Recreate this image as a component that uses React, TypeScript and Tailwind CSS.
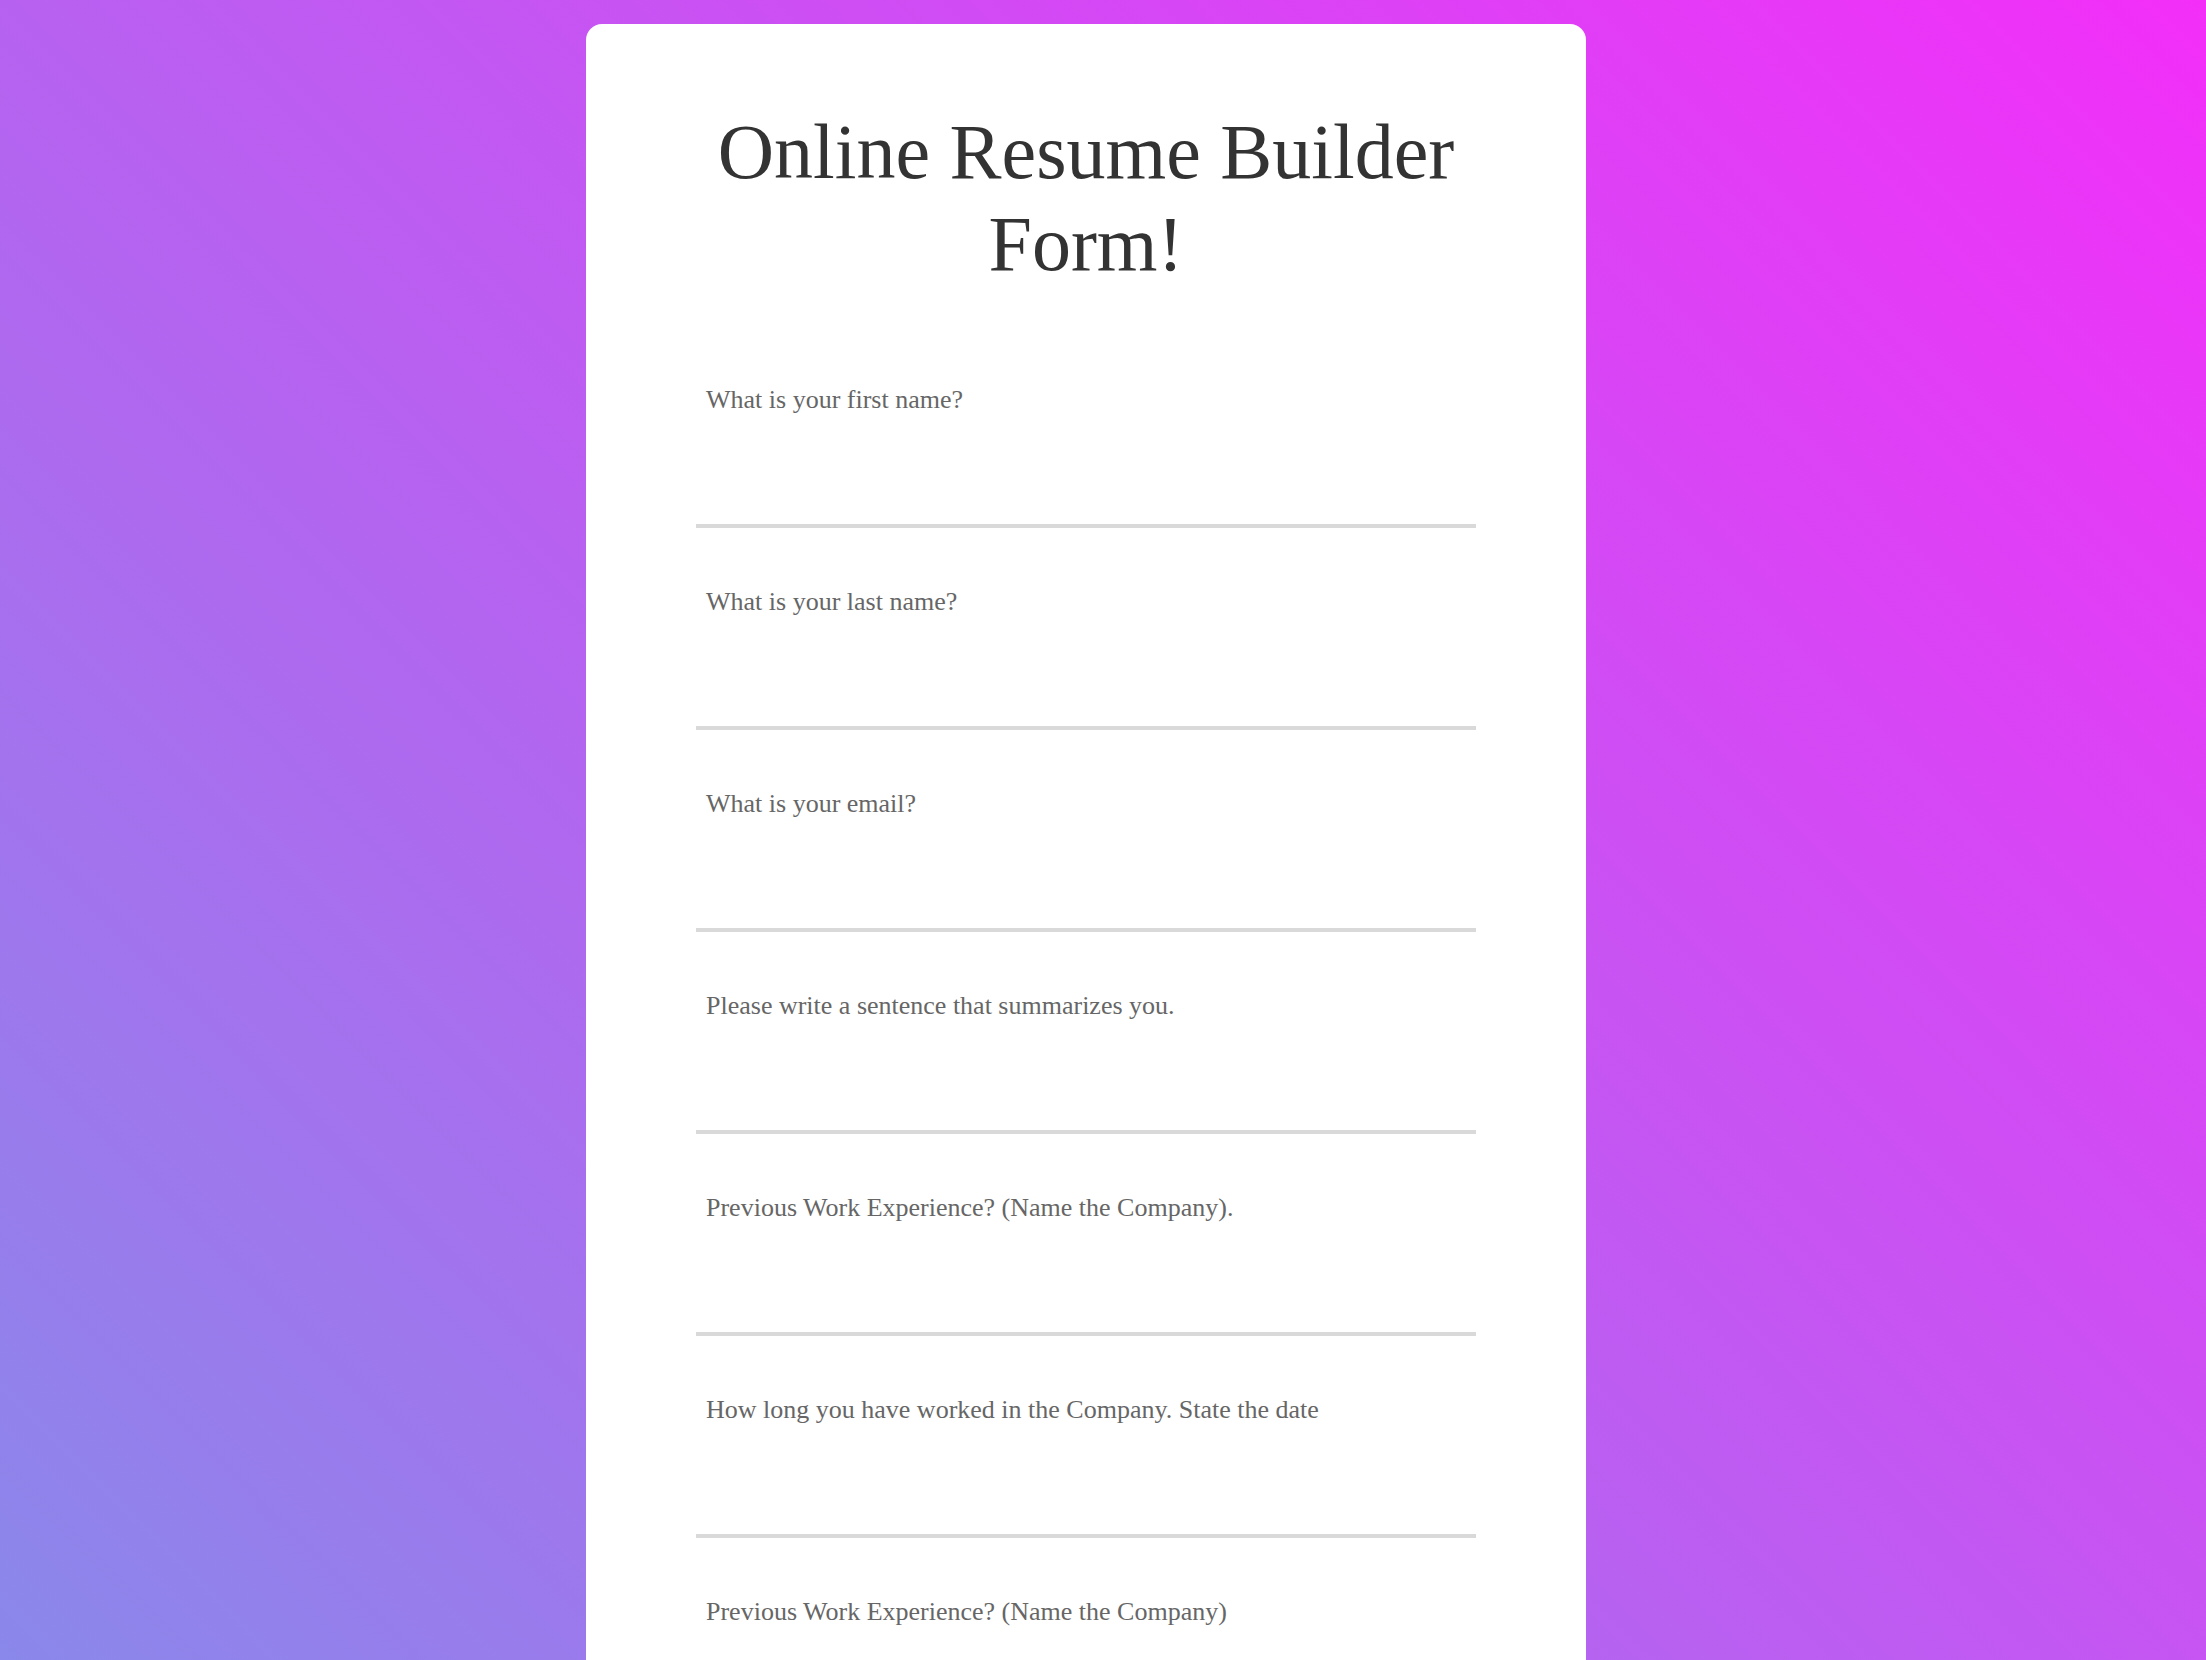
import React from "react";

const questions = [
  "What is your first name?",
  "What is your last name?",
  "What is your email?",
  "Please write a sentence that summarizes you.",
  "Previous Work Experience? (Name the Company).",
  "How long you have worked in the Company. State the date",
  "Previous Work Experience? (Name the Company)",
  "How long you have worked in the Company. State the date",
];

export default function App() {
  return (
    <div className="h-[1660px] overflow-hidden bg-[linear-gradient(45deg,#8a88ea,#f32ef9)] font-['Liberation_Serif','Times_New_Roman',serif]">
      <div className="ml-[586px] mt-[24px] w-[1000px] rounded-2xl bg-white pt-[82px] pb-20">
        <h1 className="mx-[110px] text-center text-[78px] font-normal leading-[92px] text-[#333]">
          Online Resume Builder Form!
        </h1>
        <form className="mx-[110px] mt-[96px] flex flex-col gap-[60px]">
          {questions.map((q, i) => (
            <div key={i}>
              <label className="block pl-[10px] text-[26px] leading-[28px] text-[#666]">{q}</label>
              <input
                type="text"
                className="block h-[114px] w-full border-b-4 border-[#d9d9d9] bg-transparent outline-none"
              />
            </div>
          ))}
        </form>
      </div>
    </div>
  );
}
